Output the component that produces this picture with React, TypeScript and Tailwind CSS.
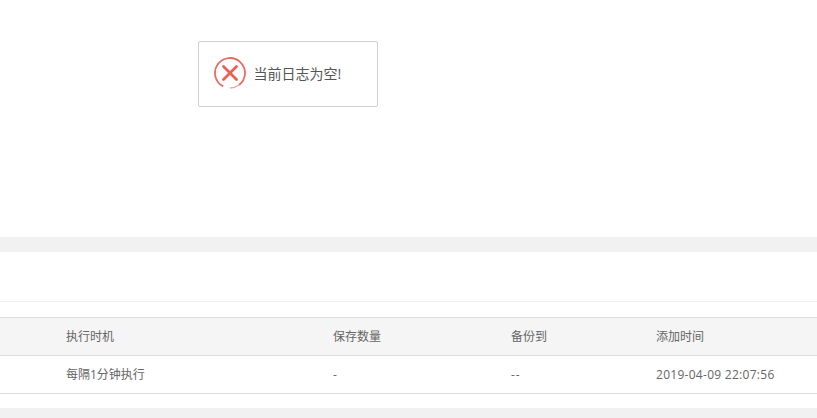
const font = "font-['Open_Sans','Noto_Sans_CJK_SC',sans-serif]";

function ErrorIcon() {
  return (
    <svg width="32" height="32" viewBox="0 0 32 32" fill="none" className="shrink-0">
      <path d="M9.2 29.4 A15 15 0 1 1 25 28" stroke="#e9594c" strokeWidth="1.8" opacity="0.9" />
      <path d="M25 28 A15 15 0 0 1 16 31" stroke="#f0a49c" strokeWidth="1.3" />
      <path d="M9.5 9.5 L22.5 22.5 M22.5 9.5 L9.5 22.5" stroke="#ec5f52" strokeWidth="2.8" strokeLinecap="round" />
    </svg>
  );
}

function Row({ cells, className }: { cells: string[]; className: string }) {
  return (
    <div className={`grid grid-cols-[267px_178px_145px_1fr] h-[38px] items-center pl-[66px] border-b border-[#ddd] text-xs text-[#666] ${className}`}>
      {cells.map((c, i) => (
        <div key={i} className="whitespace-nowrap">{c}</div>
      ))}
    </div>
  );
}

export default function App() {
  return (
    <div className={`relative w-[817px] h-[418px] overflow-hidden bg-white ${font}`}>
      <div className="h-[237px]" />
      <div className="h-[15px] bg-[#f1f1f1]" />
      <div className="h-[50px] border-b border-[#eee]" />
      <div className="h-[16px] border-b border-[#ddd]" />
      <Row className="bg-[#f5f5f5]" cells={["执行时机", "保存数量", "备份到", "添加时间"]} />
      <div className="grid grid-cols-[267px_178px_145px_1fr] h-[38px] items-center pl-[66px] pt-px border-b border-[#ddd] text-xs text-[#666] bg-white">
        <div className="whitespace-nowrap">每隔1分钟执行</div>
        <div>-</div>
        <div className="tracking-[1px]">--</div>
        <div className="whitespace-nowrap tracking-[0.28px]">2019-04-09 22:07:56</div>
      </div>
      <div className="h-[14px]" />
      <div className="h-[10px] bg-[#f1f1f1]" />

      <div className="absolute left-[198px] top-[41px] w-[180px] h-[66px] flex items-center gap-[8px] pl-[14.5px] pb-[2px] bg-white border border-[#d0d0d0] rounded-[2px] text-[14px] text-[#555]">
        <ErrorIcon />
        <span>当前日志为空!</span>
      </div>
    </div>
  );
}
